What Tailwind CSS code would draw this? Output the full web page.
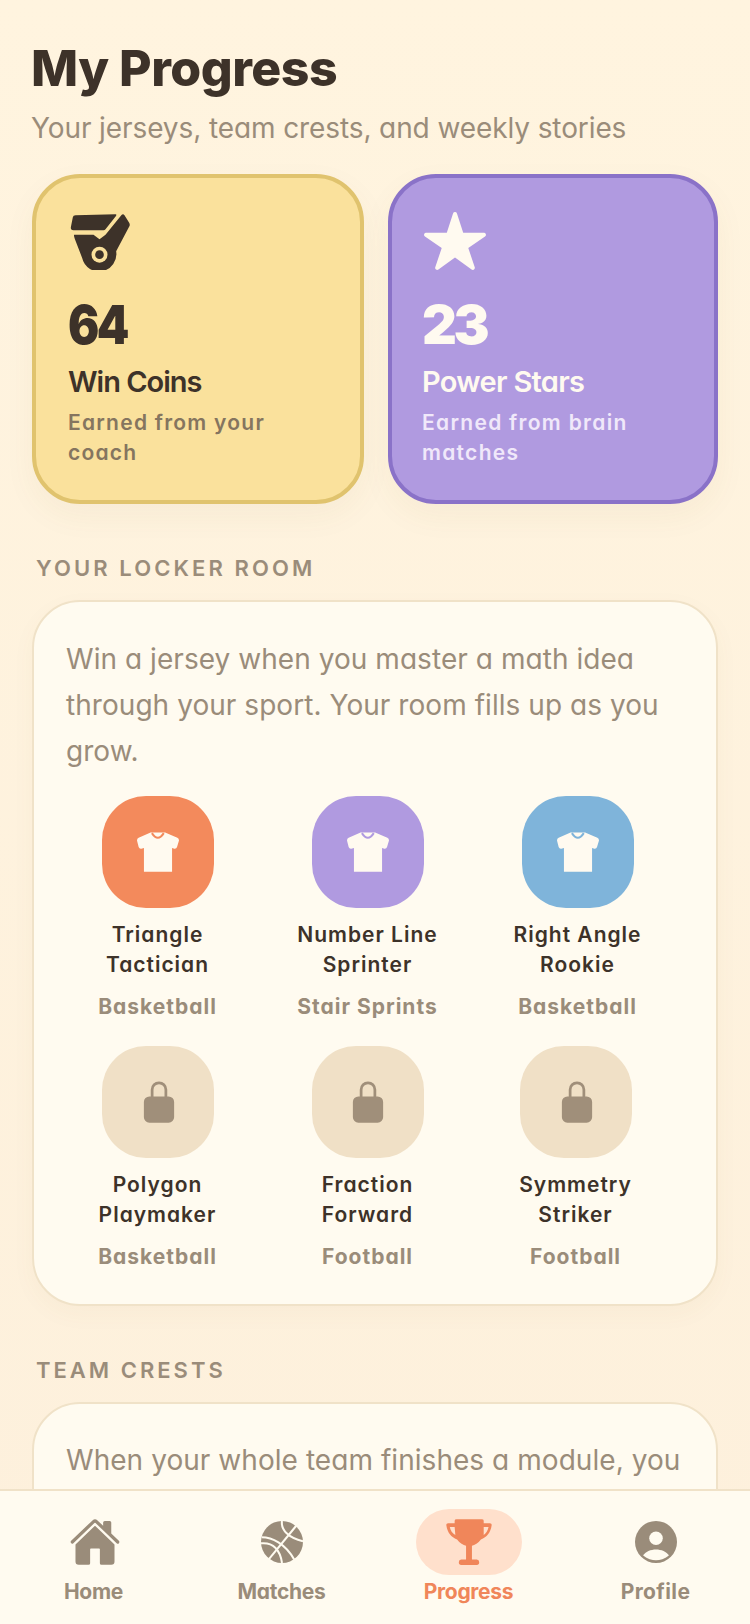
<!DOCTYPE html>
<html><head><meta charset="utf-8"><script src="https://cdn.jsdelivr.net/npm/@tailwindcss/browser@4"></script></head>
<body class="m-0">
<div class="w-[750px] h-[1624px] overflow-hidden flex flex-col bg-gradient-to-b from-[#fff4df] to-[#fdf0dc] font-['Inter','Lato',sans-serif] [font-feature-settings:'cv11'] text-[#3d3229]">
  <main class="flex-1 min-h-0 overflow-hidden px-[32px] pt-[35px]">
    <h1 class="-ml-[1px] text-[50px] leading-[66px] font-extrabold tracking-[-0.5px] h-[66px]">My Progress</h1>
    <p class="-ml-[1px] mt-[10px] text-[28px] leading-[34px] text-[#9a8c7a] tracking-[-0.1px]">Your jerseys, team crests, and weekly stories</p>
    <div class="mt-[29px] flex gap-[24px]">
      <div class="w-[332px] h-[330px] box-border rounded-[48px] border-4 border-[#e0c36e] bg-[#fae19c] pl-[32px] pr-[20px] pt-[30px] shadow-[0_12px_32px_rgba(120,90,40,0.05)]">
        <svg class="block ml-[2px] mt-[6px]" width="60" height="56" viewBox="211 580 177 168" fill="#3d3229"><path d="M226 584 L346 581 Q350 581 348 585 L316 626 Q314 629 310 629 L220 629 Q211 629 212 620 L218 590 Q219 584 226 584Z"/><path d="M222 642 L280 642 L298 656 L316 642 L364 583 Q369 578 373 584 L387 606 Q390 611 388 616 L348 692 A52 52 0 0 1 246 712 L224 655 Q220 642 222 642Z"/><circle cx="298" cy="702" r="24" fill="#fae19c"/><circle cx="298" cy="702" r="13"/></svg>
        <div class="mt-[23px] origin-left scale-x-[0.86] text-[54px] leading-[64px] font-black tracking-[-3px]">64</div>
        <div class="mt-[7px] text-[29px] leading-[36px] font-semibold tracking-[-1px]">Win Coins</div>
        <p class="mt-[8px] text-[21px] leading-[30px] font-semibold tracking-[1.25px] text-[#85755f]">Earned from your<br>coach</p>
      </div>
      <div class="w-[330px] h-[330px] box-border rounded-[48px] border-4 border-[#8a72c8] bg-[#b09ae0] pl-[30px] pr-[20px] pt-[30px] text-[#fffaf0] shadow-[0_12px_32px_rgba(120,90,40,0.05)]">
        <svg class="block ml-[0px]" width="66" height="66" viewBox="0 0 512 512" fill="#fffaf0"><path d="M394 480a16 16 0 01-9.39-3L256 383.76 127.39 477a16 16 0 01-24.55-18.08L153 310.35 23 221.2a16 16 0 019-29.2h160.38l48.4-148.95a16 16 0 0130.44 0l48.4 149H480a16 16 0 019.05 29.2L359 310.35l50.13 148.53A16 16 0 01394 480z"/></svg>
        <div class="mt-[19px] text-[54px] leading-[64px] font-black tracking-[-3.5px]">23</div>
        <div class="mt-[7px] text-[29px] leading-[36px] font-semibold tracking-[-0.7px]">Power Stars</div>
        <p class="mt-[8px] text-[21px] leading-[30px] font-semibold tracking-[1.3px] text-[#f0e8fa]">Earned from brain<br>matches</p>
      </div>
    </div>
    <h2 class="mt-[48px] ml-[4px] text-[22px] leading-[32px] font-semibold tracking-[3.1px] text-[#9a8c7a]">YOUR LOCKER ROOM</h2>
    <section class="mt-[16px] h-[706px] box-border rounded-[48px] border-2 border-[#f0e2c8] bg-[#fffbf0] pl-[32px] pr-[20px] pt-[34px] shadow-[0_8px_24px_rgba(120,90,40,0.04)]">
      <p class="text-[28px] leading-[46px] text-[#9a8c7a] tracking-[0.05px] pr-[10px]">Win a jersey when you master a math idea through your sport. Your room fills up as you grow.</p>
      <div class="-ml-[1.5px] mt-[22px] grid grid-cols-[repeat(3,186px)] gap-x-[24px] gap-y-[23px]">

        <div class="flex flex-col items-center text-center"><div class="w-[112px] h-[112px] rounded-[44px] bg-[#f38a5c] flex items-center justify-center"><svg width="42" height="40" viewBox="233 155 127 120"><path d="M274 156 H318 L355 172 Q360 174 360 180 L354 200 Q352 206 346 205 L339 203 V275 H254 V203 L246 205 Q240 206 238 200 L233 180 Q233 174 238 172Z" fill="#fffaf0"/><path d="M278 158 Q296 186 314 158" fill="none" stroke="#f38a5c" stroke-width="6"/></svg></div><div class="mt-[12px] text-[21px] leading-[30px] font-semibold tracking-[1px]">Triangle<br>Tactician</div><div class="mt-[11px] text-[21px] leading-[32px] font-bold tracking-[1px] text-[#9a8c7a]">Basketball</div></div>

        <div class="flex flex-col items-center text-center"><div class="w-[112px] h-[112px] rounded-[44px] bg-[#b09ae0] flex items-center justify-center"><svg width="42" height="40" viewBox="233 155 127 120"><path d="M274 156 H318 L355 172 Q360 174 360 180 L354 200 Q352 206 346 205 L339 203 V275 H254 V203 L246 205 Q240 206 238 200 L233 180 Q233 174 238 172Z" fill="#fffaf0"/><path d="M278 158 Q296 186 314 158" fill="none" stroke="#b09ae0" stroke-width="6"/></svg></div><div class="mt-[12px] text-[21px] leading-[30px] font-semibold tracking-[1px]">Number Line<br>Sprinter</div><div class="mt-[11px] text-[21px] leading-[32px] font-bold tracking-[1px] text-[#9a8c7a]">Stair Sprints</div></div>

        <div class="flex flex-col items-center text-center"><div class="w-[112px] h-[112px] rounded-[44px] bg-[#7fb4da] flex items-center justify-center"><svg width="42" height="40" viewBox="233 155 127 120"><path d="M274 156 H318 L355 172 Q360 174 360 180 L354 200 Q352 206 346 205 L339 203 V275 H254 V203 L246 205 Q240 206 238 200 L233 180 Q233 174 238 172Z" fill="#fffaf0"/><path d="M278 158 Q296 186 314 158" fill="none" stroke="#7fb4da" stroke-width="6"/></svg></div><div class="mt-[12px] text-[21px] leading-[30px] font-semibold tracking-[1px]">Right Angle<br>Rookie</div><div class="mt-[11px] text-[21px] leading-[32px] font-bold tracking-[1px] text-[#9a8c7a]">Basketball</div></div>

        <div class="flex flex-col items-center text-center"><div class="w-[112px] h-[112px] rounded-[44px] bg-[#f0e0c6] flex items-center justify-center"><svg class="ml-[2px]" width="44" height="44" viewBox="0 0 512 512" fill="#a08f7a"><path d="M368 192h-16v-80a96 96 0 10-192 0v80h-16a64.07 64.07 0 00-64 64v176a64.07 64.07 0 0064 64h224a64.07 64.07 0 0064-64V256a64.07 64.07 0 00-64-64zm-48 0H192v-80a64 64 0 11128 0z"/></svg></div><div class="mt-[12px] text-[21px] leading-[30px] font-semibold tracking-[1px]">Polygon<br>Playmaker</div><div class="mt-[11px] text-[21px] leading-[32px] font-bold tracking-[1px] text-[#9a8c7a]">Basketball</div></div>

        <div class="flex flex-col items-center text-center"><div class="w-[112px] h-[112px] rounded-[44px] bg-[#f0e0c6] flex items-center justify-center"><svg width="44" height="44" viewBox="0 0 512 512" fill="#a08f7a"><path d="M368 192h-16v-80a96 96 0 10-192 0v80h-16a64.07 64.07 0 00-64 64v176a64.07 64.07 0 0064 64h224a64.07 64.07 0 0064-64V256a64.07 64.07 0 00-64-64zm-48 0H192v-80a64 64 0 11128 0z"/></svg></div><div class="mt-[12px] text-[21px] leading-[30px] font-semibold tracking-[1px]">Fraction<br>Forward</div><div class="mt-[11px] text-[21px] leading-[32px] font-bold tracking-[1px] text-[#9a8c7a]">Football</div></div>

        <div class="flex flex-col items-center text-center -translate-x-[2px]"><div class="w-[112px] h-[112px] rounded-[44px] bg-[#f0e0c6] flex items-center justify-center"><svg class="ml-[2px]" width="44" height="44" viewBox="0 0 512 512" fill="#a08f7a"><path d="M368 192h-16v-80a96 96 0 10-192 0v80h-16a64.07 64.07 0 00-64 64v176a64.07 64.07 0 0064 64h224a64.07 64.07 0 0064-64V256a64.07 64.07 0 00-64-64zm-48 0H192v-80a64 64 0 11128 0z"/></svg></div><div class="mt-[12px] text-[21px] leading-[30px] font-semibold tracking-[1px]">Symmetry<br>Striker</div><div class="mt-[11px] text-[21px] leading-[32px] font-bold tracking-[1px] text-[#9a8c7a]">Football</div></div>
      </div>
    </section>
    <h2 class="mt-[48px] ml-[4px] text-[22px] leading-[32px] font-semibold tracking-[3px] text-[#9a8c7a]">TEAM CRESTS</h2>
    <section class="mt-[16px] h-[400px] box-border rounded-[48px] border-2 border-[#f0e2c8] bg-[#fffbf0] pl-[32px] pr-[20px] pt-[33px]">
      <p class="text-[28px] leading-[46px] text-[#9a8c7a] tracking-[0.05px] whitespace-nowrap">When your whole team finishes a module, you</p>
    </section>
  </main>
  <nav class="h-[135px] shrink-0 box-border border-t-2 border-[#f0e2c8] bg-[#fffbf0] flex px-0 text-[21px] font-bold tracking-[-0.3px] text-[#9a8c7a]">
    <div class="w-[187px] ml-[1px] flex flex-col items-center pt-[18px]">
      <div class="w-[106px] h-[66px] flex items-center justify-center"><svg width="52" height="52" viewBox="0 0 512 512" fill="#9a8c7a"><path d="M261.56 101.28a8 8 0 00-11.06 0L66.4 277.15a8 8 0 00-2.47 5.79L63.9 448a32 32 0 0032 32H192a16 16 0 0016-16V328a8 8 0 018-8h80a8 8 0 018 8v136a16 16 0 0016 16h96.06a32 32 0 0032-32V282.94a8 8 0 00-2.47-5.79z"/><path d="M490.91 244.15l-74.8-71.56V64a16 16 0 00-16-16h-48a16 16 0 00-16 16v32l-57.92-55.38C272.77 35.14 264.71 32 256 32c-8.68 0-16.72 3.14-22.14 8.63l-212.7 203.5c-6.22 6-7 15.87-1.34 22.37A16 16 0 0043 267.56L250.5 69.28a8 8 0 0111.06 0l207.52 198.28a16 16 0 0022.59-.44c6.14-6.36 5.63-16.86-.76-22.97z"/></svg></div>
      <div class="leading-[34px] -ml-[2px]">Home</div>
    </div>
    <div class="w-[187px] flex flex-col items-center pt-[18px]">
      <div class="w-[106px] h-[66px] flex items-center justify-center"><svg width="42" height="42" viewBox="-62 -62 124 124"><circle r="62" fill="#9a8c7a"/><g fill="none" stroke="#fffbf0" stroke-width="6"><path d="M0 -62 C-4 -35 20 -12 62 -2"/><path d="M-62 4 C-25 0 -5 25 0 62"/><path d="M42 -48 L-38 50"/><path d="M-60 -14 C-30 -14 10 5 36 52"/></g></svg></div>
      <div class="leading-[34px]">Matches</div>
    </div>
    <div class="w-[187px] flex flex-col items-center pt-[18px] text-[#f0865a]">
      <div class="w-[106px] h-[66px] rounded-full bg-[#ffe0cc] flex items-center justify-center"><svg width="46" height="46" viewBox="215 145 133 133"><path d="M240 150 Q240 146 246 146 H318 Q324 146 324 150 V157 H342 Q348 157 347 163 C344 185 333 197 316 204 C308 215 298 220 290 222 V262 H304 Q311 263 311 270 Q311 278 304 278 H259 Q252 278 252 270 Q252 263 259 262 H273 V222 C265 220 255 215 247 204 C230 197 219 185 216 163 Q215 157 221 157 H240Z M240 168 H226 C228 178 233 186 242 191Z M324 168 V191 C331 186 336 178 338 168Z" fill="#f0865a" fill-rule="evenodd"/></svg></div>
      <div class="leading-[34px]">Progress</div>
    </div>
    <div class="w-[187px] flex flex-col items-center pt-[18px]">
      <div class="w-[106px] h-[66px] flex items-center justify-center"><svg width="42" height="42" viewBox="-62 -62 124 124"><circle r="62" fill="#9a8c7a"/><circle cx="0" cy="-11" r="20" fill="#fffbf0"/><path d="M-38 40 C-32 28 -15 22 0 22 C15 22 32 28 38 40 C25 50 12 54 0 54 C-12 54 -25 50 -38 40Z" fill="#fffbf0"/></svg></div>
      <div class="leading-[34px] tracking-[0.4px]">Profile</div>
    </div>
  </nav>
</div>
</body></html>
